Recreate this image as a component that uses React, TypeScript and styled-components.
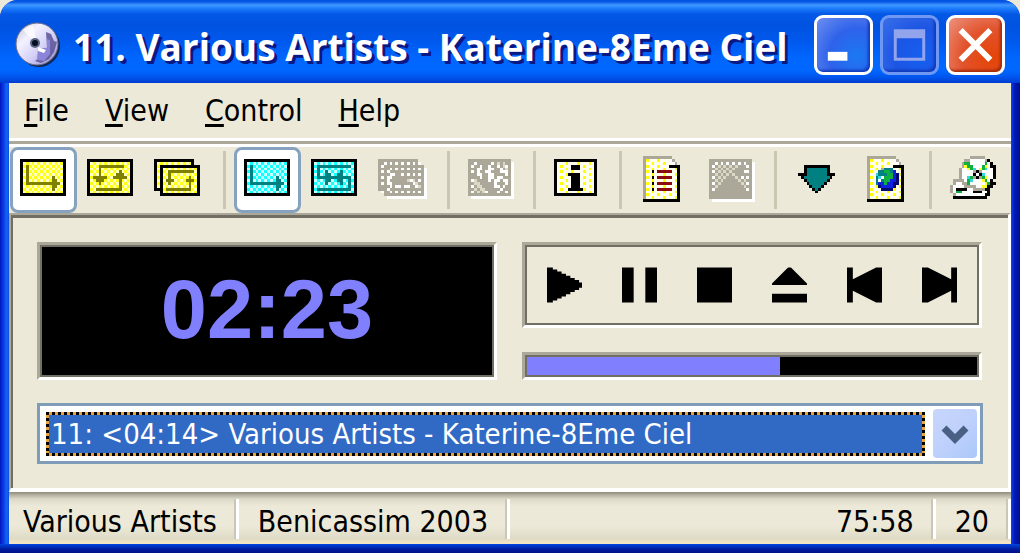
import React from 'react';
import styled, { createGlobalStyle, css } from 'styled-components';

const face = '#ece9d8';
const shade = '#aca899';
const darkShade = '#716f64';
const uiFont = '"DejaVu Sans Condensed", "Liberation Sans", sans-serif';

const GlobalStyle = createGlobalStyle`
  *, *::before, *::after { box-sizing: border-box; }
  body { margin: 0; background: ${face}; font-family: ${uiFont}; color: #000; }
  button, select { font: inherit; color: inherit; }
`;

/* ---------- pixel icons ---------- */

type Palette = Record<string, string>;

const basePalette: Palette = {
  k: '#000000', g: shade, w: '#ffffff', b: '#dcd8c6', r: '#8b0c10',
  t: '#008080', c: '#2fd8e0', n: '#0c22e0', N: '#040a70', G: '#10b040', y: '#ffff20',
};

const yellowMode: Palette = { o: '#808000', even: '#ffff10', odd: '#ffffc0' };
const cyanMode: Palette = { o: '#008080', even: '#10ffff', odd: '#c8ffff' };

// ':' is a two-colour checker fill, ';' a sparse yellow dot fill, '.' is empty.
function colorAt(ch: string, x: number, y: number, palette: Palette): string | null {
  if (ch === '.') return null;
  if (ch === ':') return (x + y) % 2 ? palette.odd : palette.even;
  if (ch === ';') return x % 2 === 0 && (x / 2 + y) % 2 === 0 ? '#ffff00' : '#fffff0';
  return palette[ch];
}

const PixelSvg = styled.svg`
  display: block;
  width: 46px;
  height: 46px;
  overflow: visible;
`;

function PixelIcon({ rows, colors = {}, embossed }: { rows: string[]; colors?: Palette; embossed?: boolean }) {
  const palette = { ...basePalette, ...colors };
  const paths: Record<string, string> = {};
  let silhouette = '';
  rows.forEach((row, y) => {
    [...row].forEach((ch, x) => {
      const color = colorAt(ch, x, y, palette);
      if (!color) return;
      paths[color] = (paths[color] || '') + `M${x} ${y}h1v1h-1z`;
      silhouette += `M${x + 1} ${y + 1}h1v1h-1z`;
    });
  });
  return (
    <PixelSvg viewBox="0 0 16 16" shapeRendering="crispEdges" aria-hidden="true">
      {embossed && <path d={silhouette} fill="#fff" />}
      {Object.entries(paths).map(([color, d]) => <path key={color} d={d} fill={color} />)}
    </PixelSvg>
  );
}

const once = [
  '................',
  'kkkkkkkkkkkkkkkk',
  'k::::::::::::::k',
  'k:o::::::::::::k',
  'k:o::::::::::::k',
  'k:o::::::::::::k',
  'k:o::::::::::::k',
  'k:o::::::::o:::k',
  'k:o::::::::oo::k',
  'k:oooooooooooo:k',
  'k::::::::::oo::k',
  'k::::::::::o:::k',
  'k::::::::::::::k',
  'kkkkkkkkkkkkkkkk',
];
const repeatOne = [
  '................',
  'kkkkkkkkkkkkkkkk',
  'k::::::::::::::k',
  'k:::ooooooooo::k',
  'k:::o::::::::::k',
  'k:::o::::::o:::k',
  'k:::o:::::ooo::k',
  'k:ooooo::ooooo:k',
  'k::ooo:::::o:::k',
  'k:::o::::::o:::k',
  'k::::::::::o:::k',
  'k::ooooooooo:::k',
  'k::::::::::::::k',
  'kkkkkkkkkkkkkkkk',
];
const repeatAll = [
  '................',
  'kkkkkkkkkkkkkk..',
  'k::::::::::::k..',
  'k:kkkkkkkkkkkkkk',
  'k:k::::::::::::k',
  'k:k::ooooooooo:k',
  'k:k::o:::::::::k',
  'k:k::o::::::o::k',
  'k:k:ooo::::ooo:k',
  'k:k::o::::::o::k',
  'k:k:::::::::o::k',
  'kkk:ooooooooo::k',
  '..k::::::::::::k',
  '..kkkkkkkkkkkkkk',
];
const shuffle = [
  '................',
  'kkkkkkkkkkkkkkkk',
  'k::::::::::::::k',
  'k:oooooooooooo:k',
  'k:o::::::::::::k',
  'k:o::o::::o::::k',
  'k:o::oo::oo::::k',
  'k:oooooooooooo:k',
  'k::::oo::oo::o:k',
  'k::::o::::o::o:k',
  'k::::::::::::o:k',
  'k:oooooooooooo:k',
  'k::::::::::::::k',
  'kkkkkkkkkkkkkkkk',
];
const shuffleAll = [
  '................',
  'gggggggggggggg..',
  'ggwgwgwgwgwgwg..',
  'gwgggggggggggggg',
  'ggggwgwgwgwgwgwg',
  'gwgwgggggggggggg',
  'ggggwwggwgwgwgwg',
  'gwgwwggggggggggg',
  'gggwggggggbwbgwg',
  'gwgwwgggggggwbgg',
  'ggggwgwwgwwggwbg',
  'gggwgggggggggggg',
  '..ggwgwgwgwgwgwg',
  '..gggggggggggggg',
];
const filmStrip = [
  '................',
  'ggggggggggggggg',
  'ggwgggggwgbgbgg',
  'gwggwggwggwgbwg',
  'gggwwggwwggwgbg',
  'gwgwggwwgggwwwg',
  'gggwwggwwggggwg',
  'ggggwggwwgwwggg',
  'gwbggggwgwwgwwg',
  'ggbbgggggwgggwg',
  'gwgbbggggwwgwgg',
  'ggbgbbgggggwggg',
  'gwgbgbwgggwggwg',
  'ggggggggggggggg',
];
const info = [
  '...............',
  'kkkkkkkkkkkkkkk',
  'k;;;;;;;;;;;;;k',
  'k;;;;;kkk;;;;;k',
  'k;;;;;kkk;;;;;k',
  'k;;;;;;;;;;;;;k',
  'k;;;;kkkk;;;;;k',
  'k;;;;;kkk;;;;;k',
  'k;;;;;kkk;;;;;k',
  'k;;;;;kkk;;;;;k',
  'k;;;;;kkk;;;;;k',
  'k;;;;kkkkk;;;;k',
  'k;;;;;;;;;;;;;k',
  'kkkkkkkkkkkkkkk',
];
const playlist = [
  '.gggggggggg...',
  '.g;;;;;;;;wg..',
  '.g;;;;;;;;wwg.',
  '.g;;;;;;;;kkkk',
  '.g;;;;;;;;;;;k',
  '.g;;k;rrrrr;;k',
  '.g;;;;;;;;;;;k',
  '.g;;k;rrrrr;;k',
  '.g;;;;;;;;;;;k',
  '.g;;k;rrrrr;;k',
  '.g;;;;;;;;;;;k',
  '.g;;k;rrrrr;;k',
  '.g;;;;;;;;;;;k',
  '.g;;;;;;;;;;;k',
  '.g;;;;;;;;;;;k',
  '.kkkkkkkkkkkkk',
];
const picture = [
  '...............',
  'ggggggggggggggg',
  'ggwgwgwgwgwgwgg',
  'gwgbgbgbgbgggwg',
  'ggbgbgbgbgggggg',
  'gwgbgbgbggggwwg',
  'ggbgbgbgbgggggg',
  'gwgbgbgggbgwgwg',
  'ggbgbgggggbgbgg',
  'gwgbgggggggbgwg',
  'ggbgggggggggbgg',
  'gwgggggggggggwg',
  'ggggggggggggggg',
  'ggggggggggggggg',
  'ggggggggggggggg',
];
const download = [
  '',
  '',
  '',
  '...kkkkkkkkk..',
  '...ktttttttk..',
  '...ktttttttk..',
  '.kkktttttttkkk',
  '..ktttttttttk.',
  '...ktttttttk..',
  '....ktttttk...',
  '.....ktttk....',
  '......ktk.....',
  '.......k......',
];
const webPage = [
  '.gggggggggg...',
  '.g;;;;;;;;wg..',
  '.g;;;;;;;;wwg.',
  '.g;;;;;;;;kkkk',
  '.g;;;;gttt;;;k',
  '.g;;;ttGGtn;;k',
  '.g;;ctttGGnN;k',
  '.g;;tcwGGGnN;k',
  '.g;;twtGGnnN;k',
  '.g;;tnnGnnNN;k',
  '.g;;;NnnnnN;;k',
  '.g;;;;NNNN;;;k',
  '.g;;;;;;;;;;;k',
  '.g;;;;;;;;;;;k',
  '.g;;;;;;;;;;;k',
  '.kkkkkkkkkkkkk',
];
const discDrive = [
  '.......ggggg....',
  '.....ggwwwwwgk..',
  '....gGGwwwwwGwk.',
  '....gyGGwwwGywkk',
  '...gwwyGcwyGcwwk',
  '...gwwwwgkgwwwwk',
  '...gwwwwkwkcwwwk',
  '...gwwcGgkgGywwk',
  '.ggggwGcwwwyGwk.',
  '.gwwggGwwwwwyGkk',
  'gwwwwggggwwyykk.',
  'gwkkkkwwggggkk..',
  'gwGGwwwwkkkwwk..',
  '.gwwwwwwwwwwkk..',
  '.kkkkkkkkkkkk...',
];

/* ---------- window frame ---------- */

const Window = styled.div`
  min-height: 100vh;
  display: flex;
  flex-direction: column;
  padding: 0 9px 9px;
  border-radius: 18px 18px 0 0;
  background:
    linear-gradient(#0046e0, #001a9c 60%, #00108c) bottom / 100% 9px no-repeat,
    linear-gradient(90deg, #0016c0, #0a36e0 35%, #1468f4 75%, #0a4ce0) left / 9px 100% no-repeat,
    linear-gradient(90deg, #0a46f0, #0018b8 40%, #00108c) right / 9px 100% no-repeat,
    #0054e3;
`;

const TitleBar = styled.header`
  display: flex;
  align-items: center;
  gap: 8px;
  height: 83px;
  margin: 0 -9px;
  padding: 6px 15px 0;
  border-radius: 18px 18px 0 0;
  background: linear-gradient(
    #0050e0 0, #0a5ae8 2px, #3f98ff 5px, #1a78fa 9px, #0458e6 14px, #0053e1 26px,
    #0058ec 40px, #0066fe 58px, #0068ff 70px, #0056ee 77px, #003cd0 83px
  );
`;

const DiscSvg = styled.svg`
  width: 46px;
  height: 46px;
  flex: none;
`;

const Title = styled.h1`
  flex: 1;
  min-width: 0;
  margin: 0 0 0 4px;
  padding-top: 4px;
  font: bold 37px/50px "Open Sans", "Liberation Sans", sans-serif;
  color: #fff;
  white-space: nowrap;
  text-shadow: 3px 3px 0 #0a1883;
`;

const WindowButtons = styled.div`
  display: flex;
  gap: 7px;
`;

const WindowButton = styled.button<{ $kind: 'plain' | 'dim' | 'close' }>`
  width: 59px;
  height: 60px;
  padding: 0;
  border: 3px solid ${p => (p.$kind === 'dim' ? '#6f98f4' : '#fff')};
  border-radius: 9px;
  background: ${p => ({
    plain: 'radial-gradient(circle at 75% 70%, #1b78f4, #2f62ea 50%, #6e8ff0 100%)',
    dim: 'radial-gradient(circle at 75% 70%, #1560f0, #1c55e4 50%, #3c70e8 100%)',
    close: 'radial-gradient(circle at 80% 75%, #e44406, #e2532c 50%, #ec9480 100%)',
  }[p.$kind])};
  box-shadow: inset -2px -2px 3px ${p => (p.$kind === 'close' ? '#a02a08' : '#1038b8')};

  svg { display: block; width: 53px; height: 54px; }
`;

const Client = styled.div`
  flex: 1;
  display: flex;
  flex-direction: column;
  background: ${face};
`;

/* ---------- menu and toolbar ---------- */

const MenuBar = styled.nav`
  display: flex;
  height: 55px;
  padding: 0 5px;
  align-items: center;
`;

const MenuButton = styled.button`
  padding: 0 10px;
  margin-right: 16px;
  border: 0;
  background: none;
  font-size: 30px;
  line-height: 40px;

  u { text-decoration-thickness: 3px; text-underline-offset: 3px; }
`;

const Etch = styled.div`
  height: 9px;
  border: solid #fff;
  border-width: 3px 0;
  background: ${shade};
`;

const Toolbar = styled.div`
  display: flex;
  padding-left: 1px;
  height: 66px;
`;

const ToolGroup = styled.div<{ $modes?: boolean }>`
  display: flex;
  gap: 2px;
  ${p => p.$modes && css`gap: 0; padding-right: 4px;`}
`;

const ToolSeparator = styled.div`
  width: 3px;
  height: 58px;
  margin: 4px 8px;
  background: #cbc7b2;
`;

const ToolButton = styled.button`
  width: 67px;
  height: 66px;
  padding: 0 1px 2px 0;
  display: grid;
  place-items: center;
  border: 3px solid transparent;
  border-radius: 8px;
  background: none;

  &[aria-pressed='true'] { border-color: #86a2bf; background: #fff; }
`;

/* ---------- player ---------- */

const Player = styled.main`
  flex: 1;
  display: grid;
  grid-template-columns: repeat(2, minmax(0, 1fr));
  grid-template-rows: auto auto 1fr;
  gap: 23px 25px;
  padding: 27px 26px 0;
  border: solid;
  border-width: 2px 3px 4px 2px;
  border-color: ${shade} #fff #fff ${shade};
  box-shadow: inset 2px 3px 0 ${darkShade};
`;

const Well = styled.div`
  display: grid;
  grid-template-columns: minmax(0, 1fr);
  border: 3px solid;
  border-color: ${shade} #fff #fff ${shade};
`;

const TimeDisplay = styled.output`
  display: grid;
  place-items: center;
  padding-bottom: 4px;
  border: 2px solid ${darkShade};
  background: #000;
  color: #8080ff;
  font: bold 83px/83px "Liberation Sans", sans-serif;
`;

const Deck = styled.div`
  display: flex;
  flex-direction: column;
  gap: 24px;
`;

const Transport = styled.div`
  display: flex;
  justify-content: center;
  height: 80px;
  border: 2px solid ${darkShade};
`;

const TransportButton = styled.button`
  flex: 0 1 75px;
  min-width: 0;
  padding: 0;
  border: 0;
  background: none;
  display: grid;
  place-items: center;

  svg { width: 35px; height: 36px; }
`;

const Progress = styled.progress`
  display: block;
  width: 100%;
  height: 22px;
  border: 2px solid ${darkShade};
  appearance: none;
  background: #000;

  &::-webkit-progress-bar { background: #000; }
  &::-webkit-progress-value { background: #8080ff; }
`;

const Combo = styled.div`
  grid-column: 1 / -1;
  align-self: start;
  display: flex;
  gap: 8px;
  height: 61px;
  margin-right: -1px;
  padding: 3px;
  border: 3px solid #7f9db9;
  background: #fff;
`;

const dots = (angle: string) => `repeating-linear-gradient(${angle}, #000 0 3px, #e8a440 3px 6px)`;

const FocusFrame = styled.div`
  flex: 1;
  margin-left: 3px;
  padding: 3px 5px;
  display: flex;
  height: 44px;
  align-self: center;
  background:
    ${dots('90deg')} top / 100% 3px no-repeat,
    ${dots('90deg')} bottom / 100% 3px no-repeat,
    ${dots('180deg')} left / 3px 100% no-repeat,
    ${dots('180deg')} right / 3px 100% no-repeat,
    #316ac5;
`;

const TrackSelect = styled.select`
  flex: 1;
  min-width: 0;
  padding: 0;
  border: 0;
  outline: 0;
  appearance: none;
  background: none;
  color: #fff;
  font-size: 29px;
  line-height: 38px;
`;

const DropArrow = styled.span`
  width: 44px;
  display: grid;
  place-items: center;
  border-radius: 4px;
  background: linear-gradient(135deg, #c8d6fb, #bccffc 60%, #aac8f8);

  svg { width: 28px; height: 28px; }
`;

/* ---------- status bar ---------- */

const StatusBar = styled.footer`
  display: flex;
  align-items: stretch;
  height: 52px;
  padding: 7px 0 5px;
  background: linear-gradient(#8f8c7c 0, #b4b1a0 3px, #dcd9c8 7px, ${face} 14px, ${face} 34px, #dedac6 47px, #f0e4c4 50px);
`;

const StatusCell = styled.span<{ $grow?: boolean }>`
  flex: ${p => (p.$grow ? 1 : 'none')};
  padding: 0 19px;
  border-right: 3px solid #fff;
  box-shadow: inset -2px 0 0 #cbc7b8;
  font-size: 30px;
  line-height: 46px;
  text-align: ${p => (p.$grow ? 'right' : 'left')};
  white-space: nowrap;

  &:first-child { padding-left: 14px; }
`;

const menus = ['File', 'View', 'Control', 'Help'];

const transport = [
  { name: 'Play', d: 'M0 0h2v.7h1.5v.7H5v.7h1.5v.7H8v.8h1.5v.7H11v.8h1v1.8h-1v.8H9.500v.7H8v.8H6.500v.7H5v.7H3.500v.7H2v.7H0z' },
  { name: 'Pause', d: 'M0 0h4v12H0zM8 0h4v12H8z' },
  { name: 'Stop', d: 'M0 0h12v12H0z' },
  { name: 'Eject', d: 'M5.500 0h1L12 5.500V6H0v-.5zM0 9h12v3H0z' },
  { name: 'Previous', d: 'M0 0h2v4l8-4h2v12h-2L2 8v4H0z' },
  { name: 'Next', d: 'M12 0h-2v4L2 0H0v12h2l8-4v4h2z' },
];

export default function App() {
  return (
    <>
      <GlobalStyle />
      <Window>
        <TitleBar>
          <DiscSvg viewBox="0 0 46 46" aria-hidden="true">
            <defs>
              <linearGradient id="disc" x1="0" y1="0" x2="1" y2="1">
                <stop offset="0" stopColor="#b8b8c8" />
                <stop offset=".3" stopColor="#f4f2ff" />
                <stop offset=".6" stopColor="#d4d0f8" />
                <stop offset="1" stopColor="#8a84c0" />
              </linearGradient>
            </defs>
            <circle cx="24" cy="24" r="21" fill="#10285c" />
            <circle cx="22" cy="22" r="21" fill="url(#disc)" stroke="#6c7088" />
            <path d="M22 22L8 8a20 20 0 0 1 10-5z" fill="#fff" opacity=".7" />
            <path d="M31 10l5 2 3 7 3 1-3 10-5 7-8 4-6-2 8-6 4-8z" fill="#5a5296" opacity=".85" />
            <path d="M23 26h9v-9l3 1v14l-6 7-7-1z" fill="#8c84d8" />
            <path d="M23 25l8 3-2 3-6-2z" fill="#fff" />
            <circle cx="20" cy="21" r="5" fill="#5c6480" />
            <circle cx="20" cy="21" r="3" fill="#041020" />
          </DiscSvg>
          <Title>11. Various Artists - Katerine-8Eme Ciel</Title>
          <WindowButtons>
            <WindowButton $kind="plain" aria-label="Minimize">
              <svg viewBox="0 0 54 54"><path d="M11 34h20v9H11z" fill="#fff" /></svg>
            </WindowButton>
            <WindowButton $kind="dim" aria-label="Maximize" disabled>
              <svg viewBox="0 0 54 54"><path d="M11 11h32v32H11zM14 20v20h26V20z" fill="#92a4ec" fillRule="evenodd" /></svg>
            </WindowButton>
            <WindowButton $kind="close" aria-label="Close">
              <svg viewBox="0 0 54 54"><path d="M14 14l26 26M40 14L14 40" stroke="#fff" strokeWidth="6" strokeLinecap="square" /></svg>
            </WindowButton>
          </WindowButtons>
        </TitleBar>

        <Client>
          <MenuBar>
            {menus.map(m => <MenuButton key={m}><u>{m[0]}</u>{m.slice(1)}</MenuButton>)}
          </MenuBar>
          <Etch />
          <Toolbar role="toolbar" aria-label="Player tools">
            <ToolGroup $modes>
              <ToolButton aria-label="Play once" aria-pressed="true"><PixelIcon rows={once} colors={yellowMode} /></ToolButton>
              <ToolButton aria-label="Repeat track"><PixelIcon rows={repeatOne} colors={yellowMode} /></ToolButton>
              <ToolButton aria-label="Repeat all"><PixelIcon rows={repeatAll} colors={yellowMode} /></ToolButton>
            </ToolGroup>
            <ToolSeparator />
            <ToolGroup $modes>
              <ToolButton aria-label="In order" aria-pressed="true"><PixelIcon rows={once} colors={cyanMode} /></ToolButton>
              <ToolButton aria-label="Shuffle"><PixelIcon rows={shuffle} colors={cyanMode} /></ToolButton>
              <ToolButton aria-label="Shuffle all discs" disabled><PixelIcon rows={shuffleAll} embossed /></ToolButton>
            </ToolGroup>
            <ToolSeparator />
            <ToolGroup>
              <ToolButton aria-label="Intro scan" disabled><PixelIcon rows={filmStrip} embossed /></ToolButton>
            </ToolGroup>
            <ToolSeparator />
            <ToolGroup>
              <ToolButton aria-label="Disc information"><PixelIcon rows={info} /></ToolButton>
            </ToolGroup>
            <ToolSeparator />
            <ToolGroup>
              <ToolButton aria-label="Playlist"><PixelIcon rows={playlist} /></ToolButton>
              <ToolButton aria-label="Cover picture" disabled><PixelIcon rows={picture} embossed /></ToolButton>
            </ToolGroup>
            <ToolSeparator />
            <ToolGroup>
              <ToolButton aria-label="Download"><PixelIcon rows={download} /></ToolButton>
              <ToolButton aria-label="Web page"><PixelIcon rows={webPage} /></ToolButton>
            </ToolGroup>
            <ToolSeparator />
            <ToolGroup>
              <ToolButton aria-label="Select drive"><PixelIcon rows={discDrive} /></ToolButton>
            </ToolGroup>
          </Toolbar>

          <Player>
            <Well><TimeDisplay>02:23</TimeDisplay></Well>
            <Deck>
              <Well>
                <Transport>
                  {transport.map(t => (
                    <TransportButton key={t.name} aria-label={t.name}>
                      <svg viewBox="0 0 12 12"><path d={t.d} /></svg>
                    </TransportButton>
                  ))}
                </Transport>
              </Well>
              <Well><Progress value={143} max={254} aria-label="Track position" /></Well>
            </Deck>
            <Combo>
              <FocusFrame>
                <TrackSelect aria-label="Track">
                  <option>11: &lt;04:14&gt; Various Artists - Katerine-8Eme Ciel</option>
                </TrackSelect>
              </FocusFrame>
              <DropArrow aria-hidden="true">
                <svg viewBox="0 0 28 28"><path d="M3 8l11 11L25 8" fill="none" stroke="#4a5f84" strokeWidth="7" /></svg>
              </DropArrow>
            </Combo>
          </Player>

          <StatusBar>
            <StatusCell>Various Artists</StatusCell>
            <StatusCell>Benicassim 2003</StatusCell>
            <StatusCell $grow>75:58</StatusCell>
            <StatusCell>20</StatusCell>
          </StatusBar>
        </Client>
      </Window>
    </>
  );
}
